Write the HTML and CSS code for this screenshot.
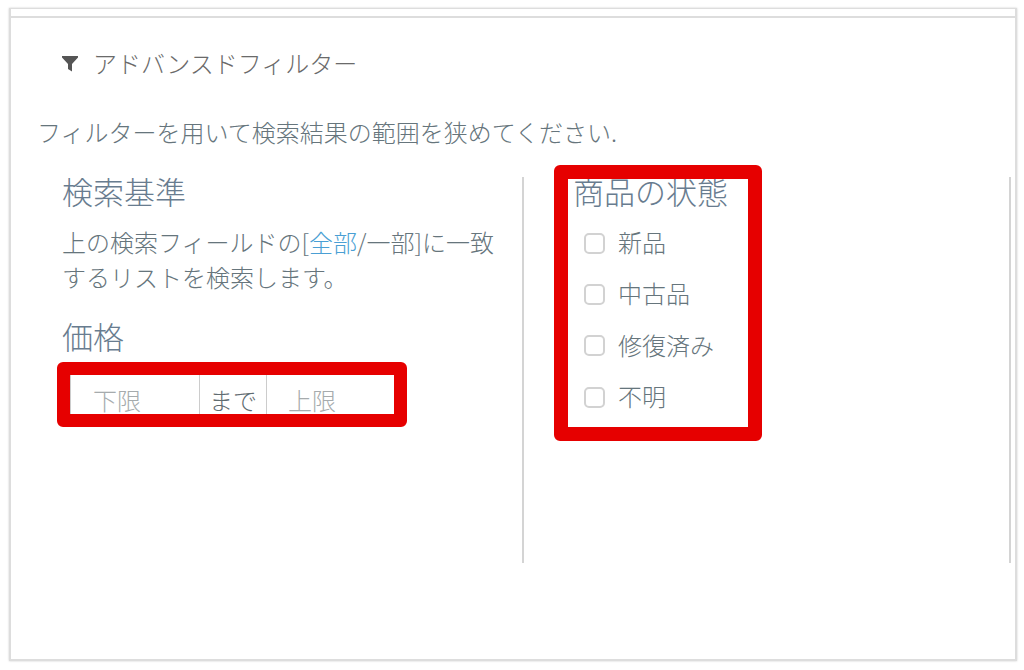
FILE: index.html
```html
<!DOCTYPE html>
<html lang="ja">
<head>
    <meta charset="UTF-8">
    <meta name="viewport" content="width=device-width, initial-scale=1.0">
    <title>アドバンスドフィルター</title>
    <link rel="stylesheet" href="styles.css">
</head>
<body>
<div class="frame">
    <div class="panel">
        <h1 class="title">
            <svg class="funnel" width="16" height="16" viewBox="0 0 16 16"><path d="M0 0H16V1.6L10 8V15.5L6 13V8L0 1.6Z"/></svg>
            アドバンスドフィルター
        </h1>
        <p class="lead">フィルターを用いて検索結果の範囲を狭めてください.</p>
        <div class="columns">
            <section class="col col-left">
                <h2>検索基準</h2>
                <p class="note">上の検索フィールドの[<a href="#">全部</a>/一部]に一致するリストを検索します。</p>
                <h2 class="price-head">価格</h2>
                <div class="price">
                    <span class="box box-low">下限</span>
                    <span class="until">まで</span>
                    <span class="box box-high">上限</span>
                    <span class="mark mark-price"></span>
                </div>
            </section>
            <section class="col col-right">
                <h2>商品の状態</h2>
                <ul class="checks">
                    <li><span class="check"></span>新品</li>
                    <li><span class="check"></span>中古品</li>
                    <li><span class="check"></span>修復済み</li>
                    <li><span class="check"></span>不明</li>
                </ul>
                <span class="mark mark-state"></span>
            </section>
        </div>
    </div>
</div>
</body>
</html>
```

FILE: styles.css
```css
html, body {margin: 0; height: 100%; background: #fff;}
body {font-family: "Noto Sans CJK JP", "Liberation Sans", sans-serif; font-weight: 300; color: #66757c;}
h1, h2, p, ul {margin: 0; padding: 0; font-weight: 300;}

.frame {box-sizing: border-box; width: 1008px; height: 653px; margin: 8px 0 0 9px; padding-top: 7px; border: 1px solid #ddd; border-width: 1px 2px 2px 2px; box-shadow: 0 0 2px #ccc;}
.panel {height: 100%; border-top: 2px solid #ddd; padding: 28px 0 0 26px; box-sizing: border-box;}

.title {display: flex; align-items: center; gap: 15px; margin-left: 25px; font-size: 24px; line-height: 34px; color: #6a6a6a;}
.funnel {margin-top: 1px; fill: #555;}
.lead {margin-top: 34px; font-size: 24px; line-height: 36px; color: #66757c;}

.columns {display: flex; margin-top: 27px;}
.col {position: relative; box-sizing: border-box; height: 386px; border-right: 2px solid #d4d4d4;}
.col-left {width: 487px; padding-left: 25px; padding-right: 26px;}
.col-right {width: 487px; padding-left: 49px;}

h2 {margin-top: -4px; font-size: 31px; line-height: 36px; color: #687c8f;}
.note {margin-top: 15px; font-size: 24px; line-height: 35px; color: #66757c;}
.note a {color: #4a9fd4; text-decoration: none;}
.price-head {margin-top: 24px;}

.price {position: relative; display: flex; margin-top: 11px; width: 336px; height: 50px; font-size: 24px;}
.box {box-sizing: border-box; height: 50px; padding-top: 16px; border: 1px solid #ccc; color: #a6abad; line-height: 36px;}
.box-low {width: 130px; margin-left: 8px; padding-left: 22px;}
.box-high {flex: 1; padding-left: 21px;}
.until {box-sizing: border-box; width: 66px; padding-left: 9px; padding-top: 12px; line-height: 46px; color: #5f6b70;}

.checks {list-style: none; margin-top: 7px; font-size: 24px;}
.checks li {display: flex; align-items: center; height: 51.3px; padding-left: 11px;}
.check {box-sizing: border-box; width: 21px; height: 21px; margin: 3px 13px 0 0; border: 2px solid #d2d2d2; border-radius: 5px;}

.mark {position: absolute; box-sizing: border-box; border: 13px solid #e60000; border-radius: 6px;}
.mark-price {left: -5px; top: -3px; width: 350px; height: 65px;}
.mark-state {left: 30px; top: -12px; width: 208px; height: 276px; border-width: 14px;}
```
